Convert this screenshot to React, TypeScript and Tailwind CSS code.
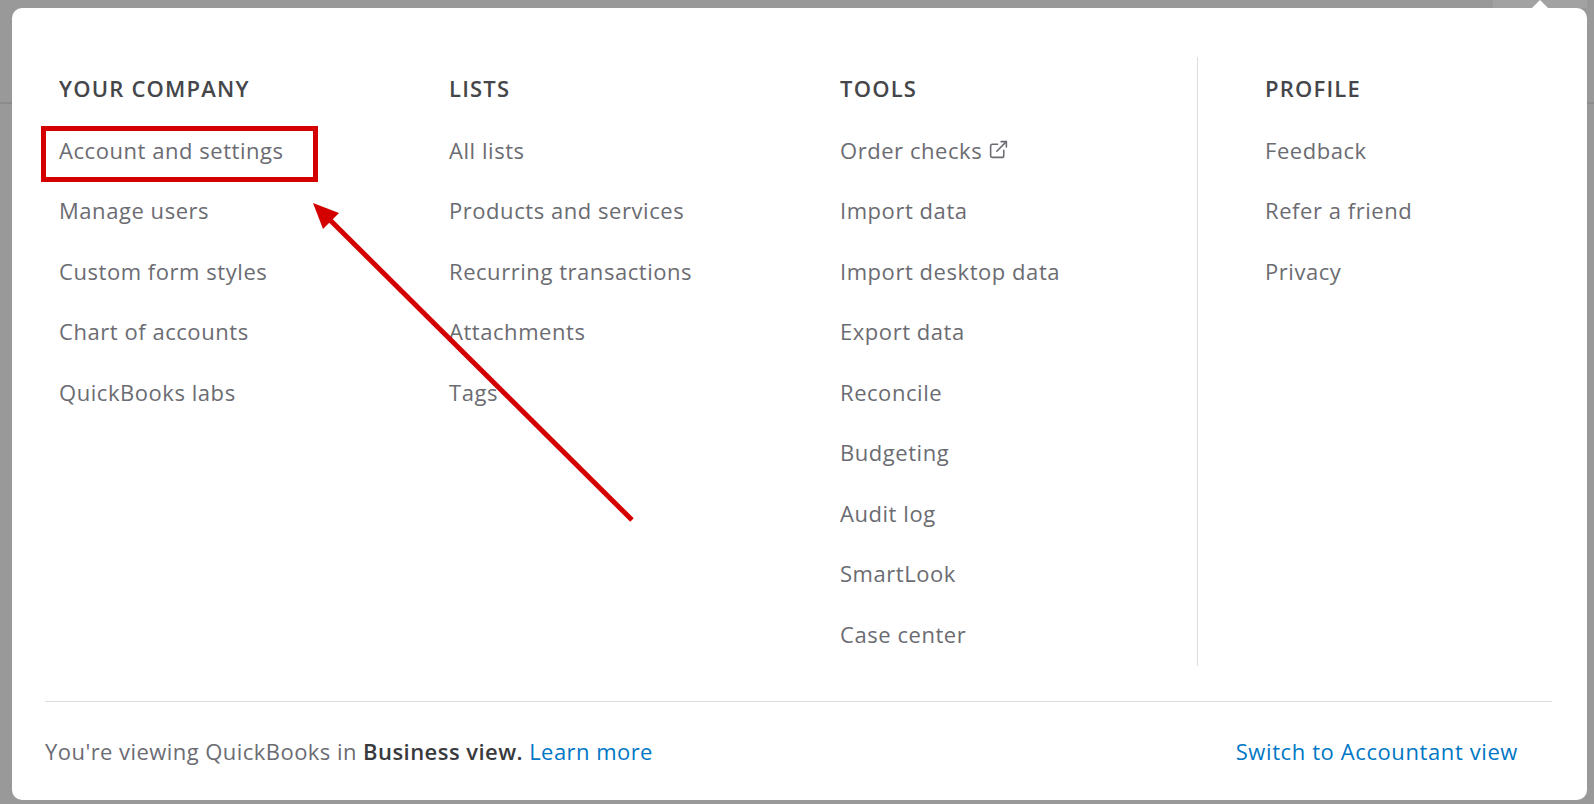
import { ExternalLink } from "lucide-react";

const columns = [
  {
    title: "YOUR COMPANY",
    width: "w-[390px]",
    items: ["Account and settings", "Manage users", "Custom form styles", "Chart of accounts", "QuickBooks labs"],
  },
  {
    title: "LISTS",
    width: "w-[391px]",
    items: ["All lists", "Products and services", "Recurring transactions", "Attachments", "Tags"],
  },
  {
    title: "TOOLS",
    width: "w-[357px]",
    items: [
      "Order checks",
      "Import data",
      "Import desktop data",
      "Export data",
      "Reconcile",
      "Budgeting",
      "Audit log",
      "SmartLook",
      "Case center",
    ],
  },
];

function MenuColumn({ title, width, items }: { title: string; width: string; items: string[] }) {
  return (
    <div className={`${width} shrink-0 flex flex-col pt-[16px]`}>
      <h3 className="text-[22px] leading-[30px] font-semibold tracking-[1.2px] text-[#45464a]">{title}</h3>
      <ul className="mt-[17px] flex flex-col">
        {items.map((item) => (
          <li key={item} className="h-[60.5px] flex items-center text-[22px] tracking-[0.55px] text-[#6b6c72]">
            {item}
            {item === "Order checks" && <ExternalLink size={21} strokeWidth={1.8} className="ml-[6px] -mt-[2px]" />}
          </li>
        ))}
      </ul>
    </div>
  );
}

export default function App() {
  return (
    <div
      className="relative w-[1594px] h-[804px] overflow-hidden bg-[#999999]"
      style={{ fontFamily: "'Open Sans', Lato, sans-serif" }}
    >
      {/* page behind the menu */}
      <div className="absolute left-0 right-0 top-[102px] h-[2px] bg-[#8c8c8c]" />
      <div className="absolute left-[1493px] top-0 w-[94px] h-[8px] bg-[#a2a2a2]" />

      <div className="absolute left-[12px] top-[8px] w-[1575px] h-[792px] rounded-[10px] bg-white flex flex-col pt-[49px] pl-[33px] pr-[35px]">
        {/* caret */}
        <div className="absolute -top-[8px] left-[1519px] w-0 h-0 border-l-[9px] border-r-[9px] border-b-[9px] border-l-transparent border-r-transparent border-b-white" />

        <div className="flex pl-[14px] h-[609px]">
          {columns.map((c) => (
            <MenuColumn key={c.title} {...c} />
          ))}
          <div className="w-px shrink-0 bg-[#dcdde0] h-full" />
          <div className="pl-[67px]">
            <MenuColumn title="PROFILE" width="w-[200px]" items={["Feedback", "Refer a friend", "Privacy"]} />
          </div>
        </div>

        <div className="mt-[35px] h-px bg-[#dcdde0]" />

        <div className="mt-[34px] flex justify-between items-center pr-[34px] text-[22px] leading-[30px] tracking-[0.45px]">
          <p className="text-[#6b6c72]">
            You're viewing QuickBooks in <span className="font-semibold text-[#393a3d]">Business view.</span>{" "}
            <a className="text-[#0077c5]">Learn more</a>
          </p>
          <a className="text-[#0077c5] tracking-[0.6px]">Switch to Accountant view</a>
        </div>
      </div>

      {/* annotation: highlight box + arrow */}
      <div className="absolute left-[41px] top-[126px] w-[277px] h-[56px] border-[5px] border-[#d40000]" />
      <svg className="absolute left-0 top-0" width="1594" height="804">
        <line x1="632" y1="520" x2="328" y2="218" stroke="#d40000" strokeWidth="5" />
        <polygon points="313,203 339,213 323,229" fill="#d40000" />
      </svg>
    </div>
  );
}
